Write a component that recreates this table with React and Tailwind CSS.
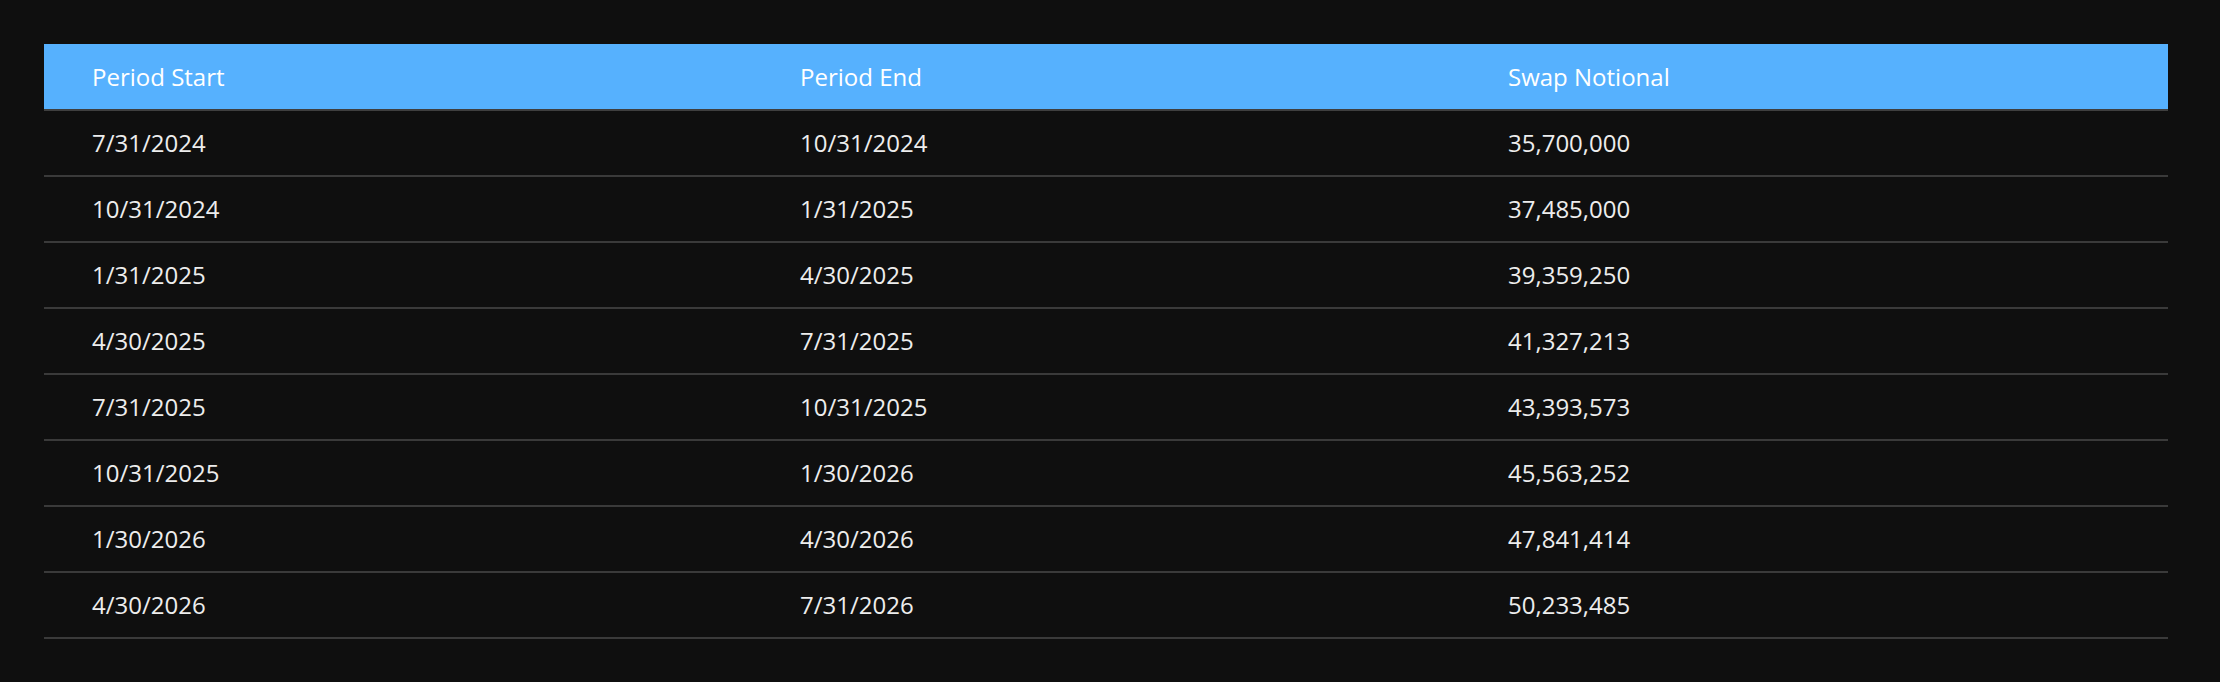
const rows = [
  ['7/31/2024', '10/31/2024', '35,700,000'],
  ['10/31/2024', '1/31/2025', '37,485,000'],
  ['1/31/2025', '4/30/2025', '39,359,250'],
  ['4/30/2025', '7/31/2025', '41,327,213'],
  ['7/31/2025', '10/31/2025', '43,393,573'],
  ['10/31/2025', '1/30/2026', '45,563,252'],
  ['1/30/2026', '4/30/2026', '47,841,414'],
  ['4/30/2026', '7/31/2026', '50,233,485'],
];

const headers = ['Period Start', 'Period End', 'Swap Notional'];

export default function App() {
  return (
    <div
      className="min-h-[682px] w-[2220px] bg-[#0f0f0f] pt-[44px] pl-[44px]"
      style={{ fontFamily: '"Open Sans", "Liberation Sans", sans-serif' }}
    >
      <table className="w-[2124px] table-fixed border-collapse">
        <thead>
          <tr className="h-[66px] bg-[#56b1fe] border-b-2 border-[#3f3f3f]">
            {headers.map(h => (
              <th key={h} className="pl-[48px] text-left text-[24px] font-normal text-white">
                {h}
              </th>
            ))}
          </tr>
        </thead>
        <tbody>
          {rows.map((r, i) => (
            <tr key={i} className="h-[66px] border-b-2 border-[#3a3a3a]">
              {r.map((c, j) => (
                <td key={j} className="pl-[48px] text-[24px] text-[#ededed]">
                  {c}
                </td>
              ))}
            </tr>
          ))}
        </tbody>
      </table>
    </div>
  );
}
